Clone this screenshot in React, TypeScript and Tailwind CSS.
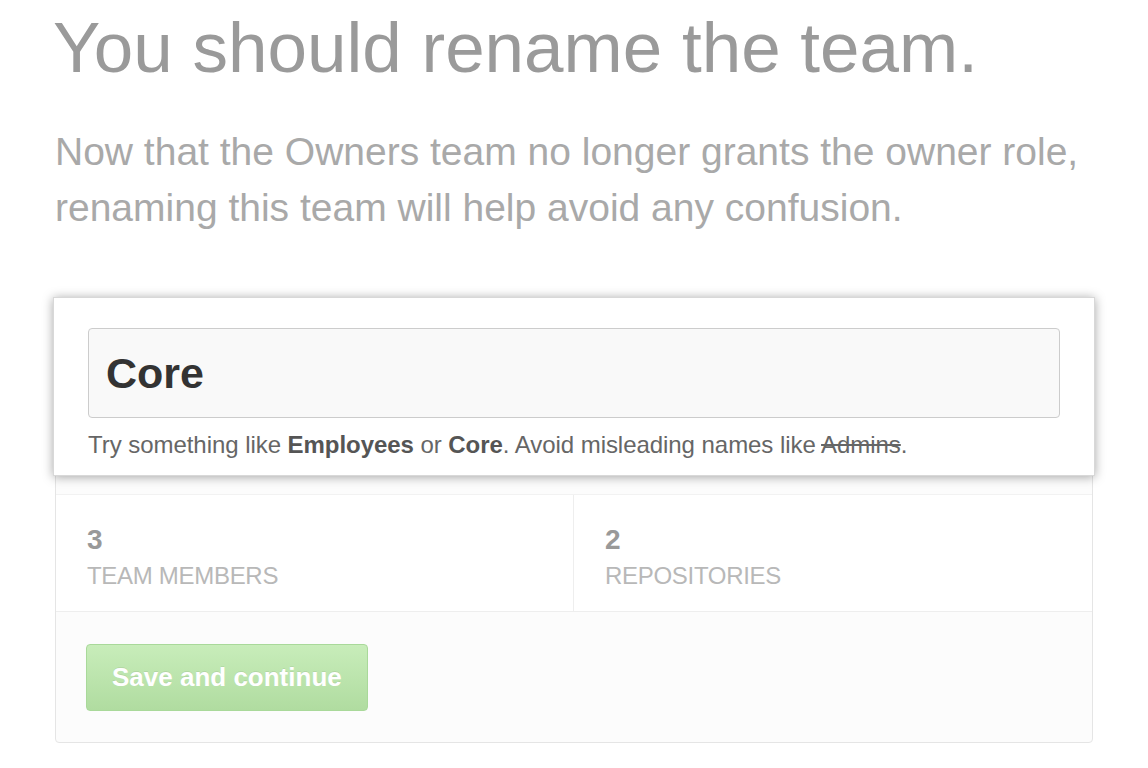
import React from "react";

const App = () => {
  return (
    <div className="min-h-screen bg-white font-['Liberation_Sans',Arial,sans-serif]">
      <div className="w-[1038px] ml-[55px] pt-[6px]">
        <h1 className="text-[71px] leading-[84px] text-[#9a9a9a] font-normal -ml-[2px]">
          You should rename the team.
        </h1>
        <p className="mt-[34px] text-[39px] leading-[56px] text-[#a9a9a9]">
          Now that the Owners team no longer grants the owner role,
          <br />
          renaming this team will help avoid any confusion.
        </p>

        {/* panel */}
        <div className="mt-[62px] border border-[#e5e5e5] rounded-[4px] bg-[#fcfcfc]">
          <div className="-mx-[3px] -mt-[2px] bg-white border border-[#d8d8d8] shadow-[0_1px_10px_rgba(0,0,0,0.35)] px-[34px] pt-[30px] pb-[16px] relative">
            <div className="h-[90px] border border-[#cccccc] rounded-[4px] bg-[#f9f9f9] flex items-center px-[17px]">
              <span className="text-[43px] font-bold text-[#333]">Core</span>
            </div>
            <p className="mt-[13px] text-[24px] text-[#666] leading-[28px] tracking-[-0.05px]">
              Try something like <b className="text-[#555]">Employees</b> or{" "}
              <b className="text-[#555]">Core</b>. Avoid misleading names like{" "}
              <span className="line-through">Admins</span>.
            </p>
          </div>

          <div className="grid grid-cols-2 bg-white border-b border-[#eeeeee] mt-[18px] border-t border-t-[#f2f2f2]">
            <div className="px-[31px] pt-[29px] pb-[21px] border-r border-[#eeeeee]">
              <div className="text-[28px] leading-[32px] font-bold text-[#999]">3</div>
              <div className="text-[24px] leading-[28px] text-[#b8b8b8] mt-[6px] tracking-[-0.3px]">
                TEAM MEMBERS
              </div>
            </div>
            <div className="px-[31px] pt-[29px] pb-[21px]">
              <div className="text-[28px] leading-[32px] font-bold text-[#999]">2</div>
              <div className="text-[24px] leading-[28px] text-[#b8b8b8] mt-[6px] tracking-[-0.3px]">
                REPOSITORIES
              </div>
            </div>
          </div>

          <div className="px-[30px] pt-[32px] pb-[31px]">
            <button className="h-[67px] px-[25px] rounded-[4px] border border-[#a9d99a] bg-gradient-to-b from-[#c8edba] to-[#b0dca0] text-white text-[26px] font-bold [text-shadow:0_-1px_0_rgba(0,0,0,0.08)]">
              Save and continue
            </button>
          </div>
        </div>
      </div>
    </div>
  );
};

export default App;
